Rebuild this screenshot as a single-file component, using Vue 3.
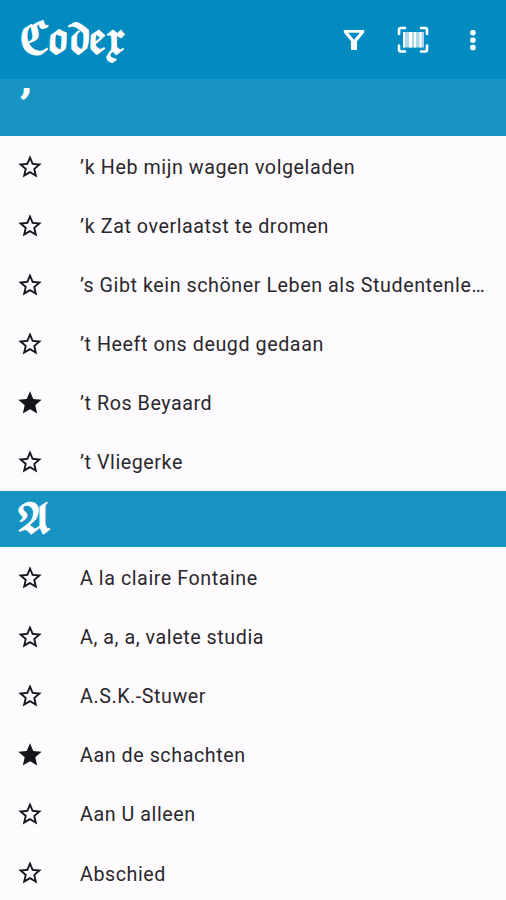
<script setup>
const sections = [
  {
    letter: '’',
    kind: 'mark',
    songs: [
      { title: '’k Heb mijn wagen volgeladen' },
      { title: '’k Zat overlaatst te dromen' },
      { title: '’s Gibt kein schöner Leben als Studentenle…' },
      { title: '’t Heeft ons deugd gedaan' },
      { title: '’t Ros Beyaard', starred: true },
      { title: '’t Vliegerke' },
    ],
  },
  {
    letter: '𝕬',
    kind: 'letter',
    songs: [
      { title: 'A la claire Fontaine' },
      { title: 'A, a, a, valete studia' },
      { title: 'A.S.K.-Stuwer' },
      { title: 'Aan de schachten', starred: true },
      { title: 'Aan U alleen' },
      { title: 'Abschied' },
    ],
  },
]
</script>

<template>
  <div class="app">
    <header class="bar">
      <h1 class="brand">𝕮𝖔𝖉𝖊𝖝</h1>
      <nav class="actions">
        <svg class="filter" width="22" height="22" viewBox="0 0 22 22">
          <path fill="#fff" fill-rule="evenodd" d="M.8 1h20.400v2.400L14 12.200V21H8v-8.800L.8 3.400zM5.200 3.800 11 10.800l5.800-7z" />
        </svg>
        <svg class="scan" width="32" height="28" viewBox="0 0 32 28">
          <g fill="none" stroke="#fff" stroke-width="2.600" stroke-linejoin="round" stroke-linecap="round">
            <path d="M2 8V4Q2 2 4 2H8M24 2h4q2 0 2 2v4M30 19.500v4q0 2-2 2h-4M8 25.500H4q-2 0-2-2v-4" />
          </g>
          <path fill="#fff" opacity=".68" d="M6 6h21v15.500H6z" />
          <path fill="#fff" d="M6 6h2v15.500H6zM12 6h3v15.500h-3zM17 6h2v15.500h-2zM22.500 6h2v15.500h-2z" />
        </svg>
        <svg class="more" width="6" height="22" viewBox="0 0 6 22">
          <g fill="#fff">
            <rect x=".2" y="1" width="5.400" height="5.400" rx="1.800" />
            <rect x=".2" y="8.400" width="5.400" height="5.400" rx="1.800" />
            <rect x=".2" y="15.800" width="5.400" height="5.400" rx="1.800" />
          </g>
        </svg>
      </nav>
    </header>
    <section v-for="s in sections" :key="s.letter">
      <h2 class="heading" :class="s.kind"><span class="initial">{{ s.letter }}</span></h2>
      <ul class="songs">
        <li v-for="song in s.songs" :key="song.title" class="song">
          <svg class="star" viewBox="0 0 24 24">
            <path v-if="song.starred" d="M12 17.270 18.180 21l-1.640-7.030L22 9.240l-7.190-.61L12 2 9.190 8.630 2 9.240l5.460 4.730L5.820 21z" />
            <path v-else d="M22 9.240l-7.190-.62L12 2 9.190 8.630 2 9.240l5.460 4.730L5.820 21 12 17.270 18.180 21l-1.630-7.030L22 9.240zM12 15.400l-3.760 2.270 1-4.280-3.320-2.880 4.380-.38L12 6.100l1.710 4.040 4.380.38-3.320 2.880 1 4.280L12 15.400z" />
          </svg>
          <span class="title">{{ song.title }}</span>
        </li>
      </ul>
    </section>
  </div>
</template>

<style>
body {
  margin: 0;
  background: #fefbff;
}
</style>

<style scoped>
.app {
  height: 900px;
  overflow: hidden;
  background: #fefbff;
  font-family: Roboto, sans-serif;
}
.bar {
  height: 79px;
  box-sizing: border-box;
  padding: 1px 30px 0 19px;
  display: flex;
  align-items: center;
  justify-content: space-between;
  background: #028bc1;
  color: #fff;
}
.brand {
  margin: 0;
  padding-top: 2px;
  font: 400 42px/1 'DejaVu Math TeX Gyre', 'DejaVu Sans', serif;
  letter-spacing: -4px;
  white-space: nowrap;
  transform: scaleX(0.83);
  transform-origin: left;
  -webkit-text-stroke: 1px #fff;
}
.actions {
  display: flex;
  align-items: center;
}
.scan {
  margin-left: 32px;
}
.more {
  margin-left: 41px;
}
.heading {
  margin: 0;
  height: 56.700px;
  box-sizing: border-box;
  padding-left: 16px;
  background: #1794c3;
  color: #fff;
  font: 400 40px/61px 'DejaVu Math TeX Gyre', 'DejaVu Sans', serif;
}
.mark {
  height: 57.100px;
  padding-left: 19px;
  line-height: 54px;
}
.initial {
  display: inline-block;
  transform: scaleX(0.85);
  transform-origin: left;
  -webkit-text-stroke: 0.900px #fff;
}
.mark .initial {
  transform: none;
  -webkit-text-stroke: 2px #fff;
}
.songs {
  margin: 0;
  padding: 0;
  list-style: none;
}
.song {
  height: 59.100px;
  box-sizing: border-box;
  padding: 2px 0 0 16px;
  display: flex;
  align-items: center;
  gap: 36px;
}
.star {
  width: 28px;
  height: 28px;
  flex: none;
  fill: #17151a;
}
.title {
  padding-top: 2.400px;
  white-space: nowrap;
  font-size: 19.700px;
  line-height: 28px;
  letter-spacing: 0.560px;
  color: #29282c;
}
</style>
